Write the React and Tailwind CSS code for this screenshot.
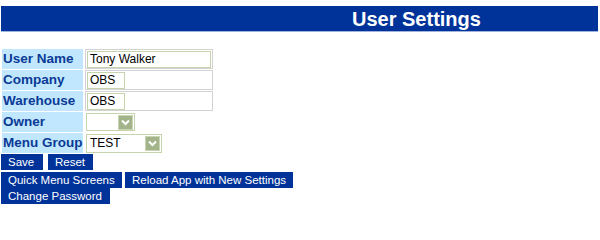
const labelCls =
  "w-[81px] h-[20px] bg-[#c0e7fd] text-[#0b3a96] font-bold text-[13.5px] leading-[20px] pl-[1px] whitespace-nowrap";

const Chevron = () => (
  <span className="w-[15px] h-[15px] bg-[#a3b48a] border border-[#c9d6b4] flex items-center justify-center">
    <svg width="9" height="7" viewBox="0 0 9 7">
      <path d="M1 1.5 L4.5 5 L8 1.5" stroke="white" strokeWidth="2" fill="none" />
    </svg>
  </span>
);

const Btn = ({ children, w }) => (
  <button className={`h-[16px] ${w} bg-[#003399] text-white text-[11.5px] leading-[16px] text-left pl-[7px] whitespace-nowrap`}>
    {children}
  </button>
);

export default function App() {
  return (
    <div className="bg-white w-[600px] h-[217px] pt-[6px] px-[1px] font-['Liberation_Sans',Arial,sans-serif]">
      <div className="h-[26px] w-[597px] bg-[#003399] border-b border-[#9fb3dc] flex items-center pl-[351px]">
        <span className="text-white font-bold text-[20px] leading-none">User Settings</span>
      </div>

      <div className="mt-[17px] flex flex-col gap-[1px] pl-[1px]">
        <div className="flex gap-[2px]">
          <div className={labelCls}>User Name</div>
          <div className="w-[128px] h-[20px] border border-[#d3d3d3] px-[1px] py-[0.5px]">
            <div className="w-[124px] h-[17px] border border-[#c5d4ac] text-[12px] leading-[15px] pl-[2px] text-black">Tony Walker</div>
          </div>
        </div>
        <div className="flex gap-[2px]">
          <div className={labelCls}>Company</div>
          <div className="w-[128px] h-[20px] border border-[#d3d3d3] px-[1px] py-[0.5px]">
            <div className="w-[38px] h-[17px] border border-[#c5d4ac] text-[12px] leading-[15px] pl-[2px] text-black">OBS</div>
          </div>
        </div>
        <div className="flex gap-[2px]">
          <div className={labelCls}>Warehouse</div>
          <div className="w-[128px] h-[20px] border border-[#d3d3d3] px-[1px] py-[0.5px]">
            <div className="w-[38px] h-[17px] border border-[#c5d4ac] text-[12px] leading-[15px] pl-[2px] text-black">OBS</div>
          </div>
        </div>
        <div className="flex gap-[2px]">
          <div className={labelCls}>Owner</div>
          <div className="h-[20px] flex items-center">
            <div className="w-[49px] h-[18px] border border-[#c5d4ac] flex items-center justify-end pr-[1px] ml-[1px]">
              <Chevron />
            </div>
          </div>
        </div>
        <div className="flex gap-[2px]">
          <div className={labelCls}>Menu Group</div>
          <div className="h-[20px] flex items-center">
            <div className="w-[76px] h-[19px] border border-[#c5d4ac] flex items-center justify-between pl-[3px] pr-[1px] ml-[1px]">
              <span className="text-[12px] text-black leading-none">TEST</span>
              <Chevron />
            </div>
          </div>
        </div>
      </div>

      <div className="mt-[1px] flex gap-[5px]">
        <Btn w="w-[42px]">Save</Btn>
        <Btn w="w-[45px]">Reset</Btn>
      </div>
      <div className="mt-[2px] w-[300px] flex flex-wrap gap-x-[3px]">
        <Btn w="w-[121px]">Quick Menu Screens</Btn>
        <Btn w="w-[168px]">Reload App with New Settings</Btn>
        <Btn w="w-[109px]">Change Password</Btn>
      </div>
    </div>
  );
}
